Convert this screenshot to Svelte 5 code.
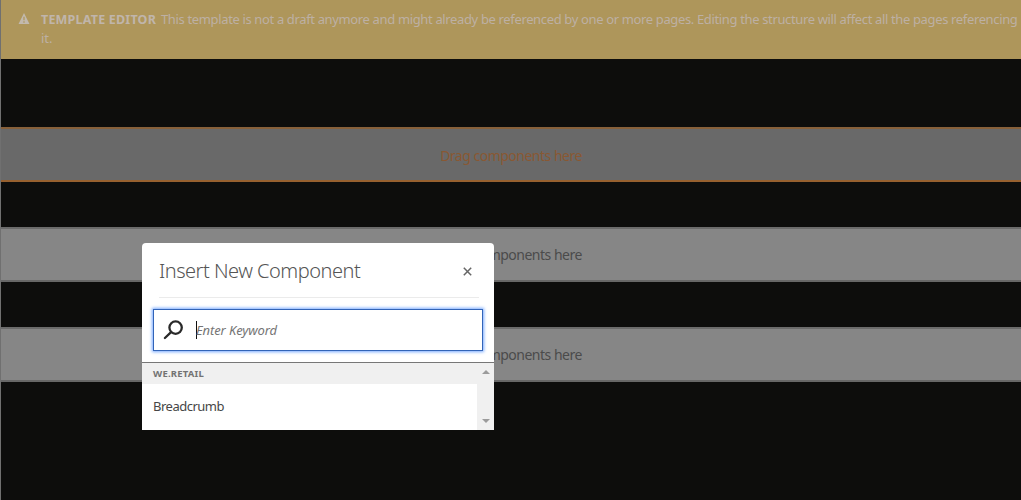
<script>
  const zones = [
    { active: true },
    { active: false },
    { active: false }
  ];
</script>

<main class="editor">
  <header class="banner">
    <svg class="warning" viewBox="0 0 12 12" width="12" height="11">
      <path fill-rule="evenodd" d="M6 0 12 12H0ZM5.3 4v4h1.4V4ZM5.3 9v1.5h1.4V9Z" />
    </svg>
    <div class="message">
      <div class="line"><b>TEMPLATE EDITOR</b><span>This template is not a draft anymore and might already be referenced by one or more pages. Editing the structure will affect all the pages referencing</span></div>
      <div class="line">it.</div>
    </div>
  </header>

  <section class="canvas">
    {#each zones as zone}
      <div class="zone" class:active={zone.active}><span>Drag components here</span></div>
    {/each}
  </section>

  <div class="dialog" role="dialog" aria-label="Insert New Component">
    <div class="head">
      <h2>Insert New Component</h2>
      <svg class="close" viewBox="0 0 9 9" width="9" height="9"><path d="M.8.8 8.2 8.2M8.2.8.8 8.2" /></svg>
    </div>
    <div class="search">
      <svg viewBox="0 0 20 20" width="20" height="20">
        <circle cx="12.6" cy="7.6" r="6.2" />
        <path d="M8.1 12.1 1.9 18" />
      </svg>
      <i class="caret"></i>
      <span class="placeholder">Enter Keyword</span>
    </div>
    <div class="results">
      <div class="list">
        <div class="group"><span>WE.RETAIL</span></div>
        <div class="item"><span>Breadcrumb</span></div>
      </div>
      <div class="scroll">
        <svg viewBox="0 0 8 4" width="8" height="4"><path d="M4 0 8 4H0Z" /></svg>
        <svg viewBox="0 0 8 4" width="8" height="4"><path d="M0 0H8L4 4Z" /></svg>
      </div>
    </div>
  </div>
</main>

<style>
  :global(body) { background: #0d0d0c; }
  .editor {
    position: relative;
    box-sizing: border-box;
    width: 1021px;
    height: 500px;
    overflow: hidden;
    border-left: 1px solid #707070;
    background: #0d0d0c;
    font-family: "Noto Sans", "Open Sans", sans-serif;
    white-space: nowrap;
  }
  .banner {
    box-sizing: border-box;
    display: flex;
    height: 59px;
    padding: 10px 0 0 17px;
    background: #ae965b;
    color: #bdb0a4;
  }
  .warning { margin: 3px 11px 0 0; fill: #c2b9ae; flex: none; }
  .message { font-size: 13px; line-height: 19px; }
  .line { display: flex; }
  .line b { width: 120px; font-size: 12.5px; letter-spacing: 0.2px; color: #c0b5ab; }
  .line span { letter-spacing: -0.356px; }
  .canvas {
    display: flex;
    flex-direction: column;
    gap: 45px;
    padding-top: 68px;
  }
  .zone {
    box-sizing: border-box;
    height: 55px;
    display: flex;
    align-items: center;
    justify-content: center;
    background: #868686;
    border-top: 2px solid #6b6b6b;
    border-bottom: 2px solid #676767;
    color: #4b4b4b;
    font-size: 14px;
  }
  .zone span { letter-spacing: -0.5px; }
  .zone.active span { padding-top: 1px; }
  .zone.active {
    background: #696969;
    border-top-color: #87603a;
    border-bottom-color: #96602f;
    color: #895832;
  }
  .dialog {
    position: absolute;
    left: 141px;
    top: 243px;
    width: 352px;
    height: 187px;
    display: flex;
    flex-direction: column;
    overflow: hidden;
    border-radius: 4px 4px 0 0;
    background: #fff;
  }
  .head {
    box-sizing: border-box;
    height: 55px;
    flex: none;
    margin: 0 15px 0 17px;
    padding-right: 7px;
    display: flex;
    align-items: center;
    justify-content: space-between;
    border-bottom: 1px solid #ebebeb;
  }
  h2 { margin: 2px 0 0; font-size: 20px; font-weight: 300; line-height: 28px; letter-spacing: -0.5px; color: #555; }
  .close { margin-top: 3px; stroke: #666; stroke-width: 1.5; fill: none; }
  .search {
    box-sizing: border-box;
    height: 42px;
    flex: none;
    margin: 11px;
    padding-left: 9px;
    display: flex;
    align-items: center;
    border: 1px solid #3264b8;
    box-shadow: 0 0 3px 1px #77a9ff;
    background: #fff;
  }
  .search svg { fill: none; stroke: #292929; stroke-width: 2.3; stroke-linecap: round; }
  .caret { width: 1px; height: 18px; margin: 0 -1px 0 13px; background: #111; }
  .placeholder { font-size: 13px; font-style: italic; letter-spacing: -0.1px; color: #757575; }
  .results { flex: 1; display: flex; border-top: 1px solid #777; }
  .list { flex: 1; }
  .group {
    height: 21px;
    padding-left: 11px;
    background: #f0f0f0;
    color: #737373;
    font-size: 9.5px;
    font-weight: 700;
    line-height: 21px;
    letter-spacing: 0.2px;
  }
  .item { padding-left: 11px; color: #464646; font-size: 13px; line-height: 44px; letter-spacing: -0.5px; }
  .scroll {
    box-sizing: border-box;
    width: 17px;
    padding: 7px 0;
    display: flex;
    flex-direction: column;
    align-items: center;
    justify-content: space-between;
    background: #f0f0f0;
  }
  .scroll svg { fill: #9b9b9b; }
</style>
